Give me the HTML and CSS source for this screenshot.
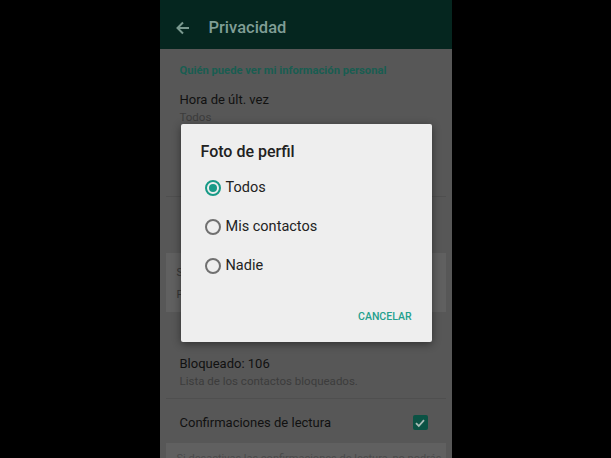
FILE: index.html
```html
<!DOCTYPE html>
<html lang="es">
<head>
    <meta charset="UTF-8">
    <meta name="viewport" content="width=device-width, initial-scale=1.0">
    <title>Privacidad</title>
    <link rel="stylesheet" href="styles.css">
</head>
<body>
    <div class="screen">
        <header class="appbar">
            <svg class="back" width="14" height="14" viewBox="0 0 14 14">
                <path d="M13 7H2M7 1.5 1.5 7 7 12.5" fill="none" stroke="currentColor" stroke-width="2"/>
            </svg>
            <h1>Privacidad</h1>
        </header>

        <main class="settings">
            <p class="section-title">Quién puede ver mi información personal</p>

            <div class="item">
                <div class="item-title">Hora de últ. vez</div>
                <div class="item-sub">Todos</div>
            </div>
            <!-- rows covered by the dialog -->
            <div class="item blank-lg"></div>
            <hr class="divider">
            <div class="item blank-sm"></div>

            <div class="note">
                <p>Si no compartes tu hora de últ. vez, no podrás ver</p>
                <p>Para otras personas tampoco estará visible.</p>
            </div>

            <div class="item item-spaced">
                <div class="item-title">Bloqueado: 106</div>
                <div class="item-sub">Lista de los contactos bloqueados.</div>
            </div>
            <hr class="divider">
            <div class="item-row">
                <span class="item-title">Confirmaciones de lectura</span>
                <span class="checkbox">
                    <svg width="14" height="14" viewBox="0 0 14 14">
                        <path d="M3 7.2 5.8 10 11 4.2" fill="none" stroke="currentColor" stroke-width="1.8"/>
                    </svg>
                </span>
            </div>
            <div class="note note-bottom">
                <p>Si desactivas las confirmaciones de lectura, no podrás</p>
            </div>
        </main>

        <div class="dialog">
            <h2>Foto de perfil</h2>
            <ul class="options">
                <li><span class="radio checked"></span>Todos</li>
                <li><span class="radio"></span>Mis contactos</li>
                <li><span class="radio"></span>Nadie</li>
            </ul>
            <div class="actions">
                <button>CANCELAR</button>
            </div>
        </div>
    </div>
</body>
</html>
```

FILE: styles.css
```css
body {
    margin: 0;
    background-color: #000;
    font-family: Roboto, "Noto Sans", sans-serif;
    display: flex;
    justify-content: center;
}

.screen {
    position: relative;
    width: 292px;
    height: 458px;
    overflow: hidden;
    background-color: #575757;
}

/* top bar, status bar strip included */
.appbar {
    height: 43px;
    display: flex;
    align-items: center;
    padding: 6px 0 0 16px;
    background-color: #05261f;
    color: #7a998f;
}

.appbar .back {
    flex: none;
}

.appbar h1 {
    margin: 0 0 0 19px;
    font-size: 16.5px;
    font-weight: 500;
    color: #809e96;
}

/* list behind the dialog */
.settings {
    padding: 0 6px;
}

.section-title {
    margin: 15px 14px 4px;
    font-size: 11.2px;
    line-height: 14px;
    font-weight: 700;
    color: #195d51;
}

.item {
    padding: 10px 14px;
}

.blank-lg {
    height: 42px;
}

.blank-sm {
    height: 36px;
}

.item-spaced {
    margin-top: 34px;
}

.item-title {
    font-size: 13px;
    line-height: 16px;
    color: #111;
}

.item-sub {
    margin-top: 2px;
    font-size: 11.5px;
    line-height: 14px;
    color: #3c3c3c;
}

.divider {
    margin: 0;
    border: none;
    border-top: 1px solid #4f4f4f;
}

.note {
    padding: 9px 11px 6px;
    background-color: #606060;
}

.note p {
    margin: 0;
    font-size: 11px;
    line-height: 22px;
    color: #353535;
    white-space: nowrap;
}

.note-bottom {
    padding-top: 9px;
}

.note-bottom p {
    line-height: 14px;
    color: #4a4a4a;
}

.item-row {
    height: 41px;
    display: flex;
    align-items: center;
    justify-content: space-between;
    padding: 3px 18px 0 14px;
}

.checkbox {
    width: 15px;
    height: 15px;
    border-radius: 2px;
    background-color: #0b5244;
    color: #a9bcb6;
    display: flex;
    align-items: center;
    justify-content: center;
}

/* dialog */
.dialog {
    position: absolute;
    top: 124px;
    left: 21px;
    width: 251px;
    height: 218px;
    box-sizing: border-box;
    background-color: #eeeeee;
    border-radius: 2px;
    box-shadow: 0 2px 8px rgba(0, 0, 0, 0.45);
}

.dialog h2 {
    margin: 18px 20px 0;
    font-size: 16px;
    line-height: 20px;
    font-weight: 500;
    color: #212121;
}

.options {
    list-style: none;
    margin: 6px 0 0;
    padding: 0;
}

.options li {
    height: 39px;
    display: flex;
    align-items: center;
    padding-left: 24px;
    font-size: 14.5px;
    color: #222;
}

.radio {
    width: 16px;
    height: 16px;
    box-sizing: border-box;
    margin-right: 5px;
    border: 2px solid #707070;
    border-radius: 50%;
    display: flex;
    align-items: center;
    justify-content: center;
}

.radio.checked {
    border-color: #179a87;
}

.radio.checked::after {
    content: "";
    width: 8px;
    height: 8px;
    border-radius: 50%;
    background-color: #179a87;
}

.actions {
    display: flex;
    justify-content: flex-end;
    padding: 0 20px;
    margin-top: 25px;
}

.actions button {
    padding: 0;
    border: none;
    background: none;
    font-family: inherit;
    font-size: 10.5px;
    line-height: 14px;
    font-weight: 500;
    color: #23a08d;
    cursor: pointer;
}
```
